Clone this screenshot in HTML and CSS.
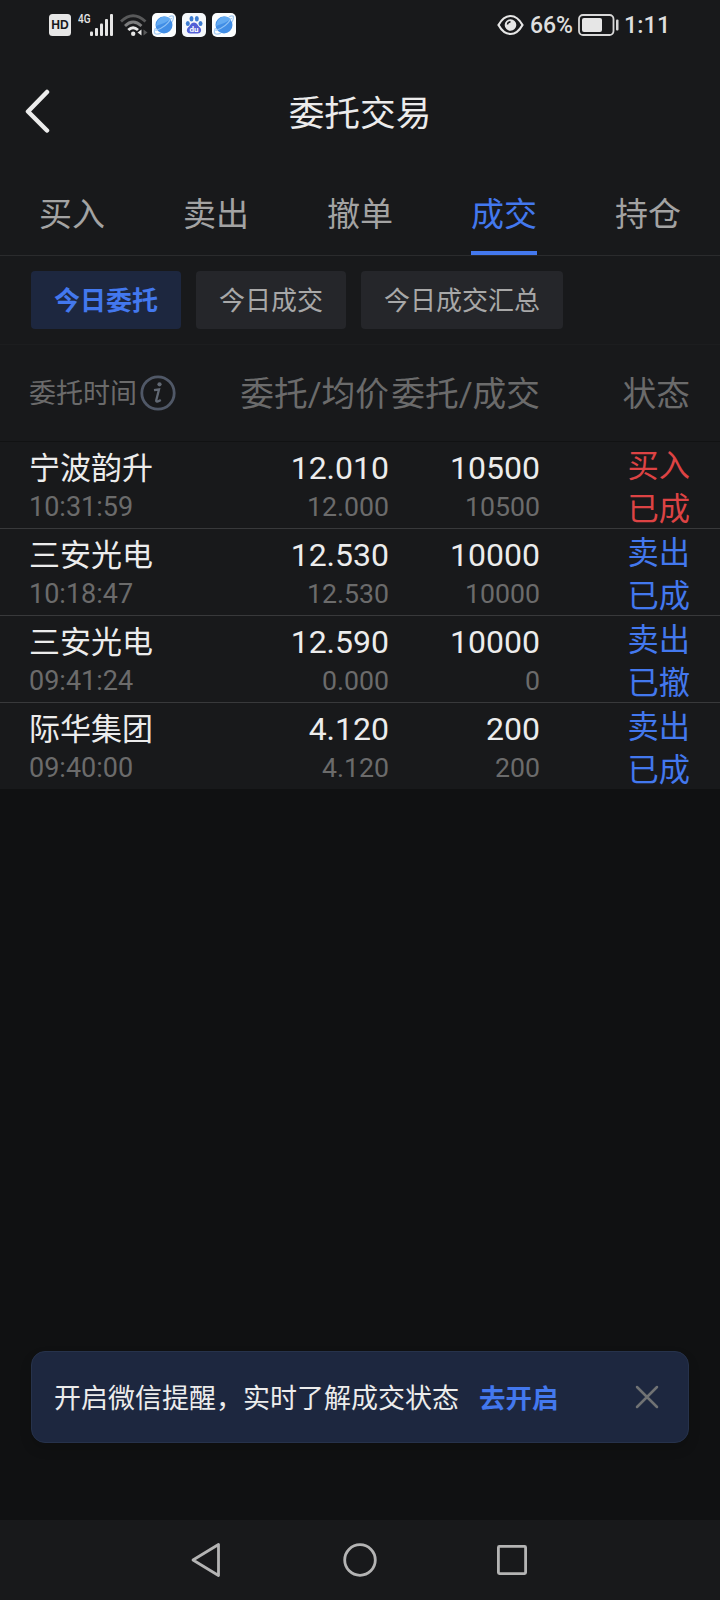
FILE: index.html
```html
<!DOCTYPE html>
<html lang="zh-CN">
<head>
	<meta charset="utf-8">
	<title>委托交易</title>
	<link rel="stylesheet" href="styles.css">
</head>
<body>
<div class="page">

	<div class="statusbar">
		<div class="status-left">
			<svg width="22" height="22" viewBox="0 0 22 22"><rect width="22" height="22" rx="3.5" fill="#e6e6e6"/><text x="11" y="15.4" class="hd" textLength="17.500" lengthAdjust="spacingAndGlyphs">HD</text></svg>
			<svg class="signal" width="36" height="32" viewBox="0 -4 36 32">
				<text x="0" y="9.800" class="net" textLength="12.500" lengthAdjust="spacingAndGlyphs">4G</text>
				<g fill="#e6e6e6"><rect x="12" y="18.500" width="3" height="4.500" rx="1"/><rect x="17" y="15" width="3" height="8" rx="1"/><rect x="22" y="10.500" width="3" height="12.500" rx="1"/><rect x="27" y="6" width="3" height="17" rx="1"/><rect x="32" y="1" width="3" height="22" rx="1"/></g>
			</svg>
			<svg class="wifi" width="28" height="24" viewBox="0 0 28 24">
				<g fill="none" stroke-width="2.800">
					<path d="M1 8.500Q13 -3 25.500 8.500" stroke="#58595a"/>
					<path d="M5 13Q13 5 21.500 13" stroke="#7c7d7e"/>
					<path d="M8.300 17Q13 12.300 18 17" stroke="#e6e6e6"/>
				</g>
				<circle cx="13.200" cy="20.800" r="2.200" fill="#e6e6e6"/>
				<path d="M21.500 16.500v6l-4-3z" fill="#e6e6e6"/><path d="M23.500 16.500v6l4-3z" fill="#58595a"/>
			</svg>
			<svg class="app" width="24" height="24" viewBox="0 0 24 24"><rect width="24" height="24" rx="5" fill="#fcfeff"/><circle cx="12" cy="12" r="8.500" fill="#428ee6"/><path d="M4 13Q5 5 12 3.600Q17 3.500 18.500 6.500Q12 11 4 13z" fill="#64abf2"/><path d="M3.500 17.500Q14 14.500 19.500 5" fill="none" stroke="#8fc2f5" stroke-width="1.200"/><path d="M3.500 15Q1.500 19 3 20.500Q5 22 9 20M17 4Q20 2 21.300 3.300Q22 5 20 9" fill="none" stroke="#a5cbf4" stroke-width="1.300"/></svg>
			<svg class="app" width="24" height="24" viewBox="0 0 24 24"><rect width="24" height="24" rx="5" fill="#f5f8fb"/>
				<g fill="#3c7bd0"><ellipse cx="5.800" cy="10.500" rx="2" ry="2.600"/><ellipse cx="9.500" cy="5.800" rx="2" ry="2.700"/><ellipse cx="14.800" cy="5.800" rx="2" ry="2.700"/><ellipse cx="18.500" cy="10.500" rx="2" ry="2.600"/></g>
				<path d="M12 9.500C15 9.500 15.500 12.500 18 14.500C20.500 17.500 18.500 20.800 15.500 20.500H8.500C5.500 20.800 3.500 17.500 6 14.500C8.500 12.500 9 9.500 12 9.500z" fill="#5360d6"/><text x="12" y="18.900" class="du">du</text></svg>
			<svg class="app" width="24" height="24" viewBox="0 0 24 24"><rect width="24" height="24" rx="5" fill="#fcfeff"/><circle cx="12" cy="12" r="8.500" fill="#428ee6"/><path d="M4 13Q5 5 12 3.600Q17 3.500 18.500 6.500Q12 11 4 13z" fill="#64abf2"/><path d="M3.500 17.500Q14 14.500 19.500 5" fill="none" stroke="#8fc2f5" stroke-width="1.200"/><path d="M3.500 15Q1.500 19 3 20.500Q5 22 9 20M17 4Q20 2 21.300 3.300Q22 5 20 9" fill="none" stroke="#a5cbf4" stroke-width="1.300"/></svg>
		</div>
		<div class="status-right">
			<svg width="27" height="22" viewBox="0 0 27 22"><path d="M1.500 11Q6.500 2 13.500 2T25.500 11Q20.500 20 13.500 20T1.500 11z" fill="none" stroke="#e6e6e6" stroke-width="2.200"/><circle cx="13.500" cy="11" r="5.800" fill="#e6e6e6"/><path d="M10.500 10.500q.3-2.500 3-2.800" fill="none" stroke="#18191b" stroke-width="1.500"/></svg>
			<span class="percent">66%</span>
			<svg class="battery" width="41" height="22" viewBox="0 0 41 22"><rect x="1" y="1" width="34.500" height="20" rx="4" fill="none" stroke="#d8d8d8" stroke-width="1.800"/><rect x="4" y="4" width="20" height="14" rx="2" fill="#e6e6e6"/><rect x="38" y="5.500" width="2.500" height="11" rx="1" fill="#d8d8d8"/></svg>
			<span class="clock">1:11</span>
		</div>
	</div>

	<div class="titlebar">
		<svg class="back" width="26" height="46" viewBox="0 0 26 46"><path d="M23 3L4 22.500L23 41.500" fill="none" stroke="#ececec" stroke-width="4.500" stroke-linecap="round" stroke-linejoin="round"/></svg>
		<div class="title">委托交易</div>
	</div>

	<div class="tabs">
		<div class="tab"><span>买入</span></div>
		<div class="tab"><span>卖出</span></div>
		<div class="tab"><span>撤单</span></div>
		<div class="tab active"><span>成交</span></div>
		<div class="tab"><span>持仓</span></div>
	</div>

	<div class="chips">
		<div class="chip on">今日委托</div>
		<div class="chip">今日成交</div>
		<div class="chip">今日成交汇总</div>
	</div>

	<div class="row head">
		<div class="head-time">委托时间<svg width="36" height="36" viewBox="0 0 36 36"><circle cx="18" cy="18" r="16.200" fill="none" stroke="#505867" stroke-width="2.800"/><circle cx="19.500" cy="9.300" r="2.100" fill="#626974"/><path d="M14 15.200L19 14.500L16.200 25.500Q15.800 27.800 20.800 25" fill="none" stroke="#626974" stroke-width="2.300"/></svg></div>
		<div class="num">委托/均价</div>
		<div class="num">委托/成交</div>
		<div class="num">状态</div>
	</div>

	<div class="list">
		<div class="row">
			<div class="name">宁波韵升<small>10:31:59</small></div>
			<div class="num">12.010<small>12.000</small></div>
			<div class="num">10500<small>10500</small></div>
			<div class="state buy">买入<br>已成</div>
		</div>
		<div class="row">
			<div class="name">三安光电<small>10:18:47</small></div>
			<div class="num">12.530<small>12.530</small></div>
			<div class="num">10000<small>10000</small></div>
			<div class="state">卖出<br>已成</div>
		</div>
		<div class="row">
			<div class="name">三安光电<small>09:41:24</small></div>
			<div class="num">12.590<small>0.000</small></div>
			<div class="num">10000<small>0</small></div>
			<div class="state">卖出<br>已撤</div>
		</div>
		<div class="row">
			<div class="name">际华集团<small>09:40:00</small></div>
			<div class="num">4.120<small>4.120</small></div>
			<div class="num">200<small>200</small></div>
			<div class="state">卖出<br>已成</div>
		</div>
	</div>

	<div class="space"></div>

	<div class="notice">
		<span class="notice-text">开启微信提醒，实时了解成交状态</span>
		<a class="open">去开启</a>
		<svg class="close" width="24" height="24" viewBox="0 0 24 24"><path d="M2 2L22 22M22 2L2 22" stroke="#707274" stroke-width="2.500" stroke-linecap="round"/></svg>
	</div>

	<div class="navbar">
		<svg width="36" height="36" viewBox="0 0 36 36"><path d="M28.500 2.500V33.500L3 18z"/></svg>
		<svg width="36" height="36" viewBox="0 0 36 36"><circle cx="18" cy="18" r="15.300"/></svg>
		<svg width="36" height="36" viewBox="0 0 36 36"><rect x="4.400" y="4.400" width="27.200" height="27.200" rx="1"/></svg>
	</div>

</div>
</body>
</html>
```
FILE: styles.css
```css
body{
	margin: 0;
	background-color: #101112;
	font-family: Roboto, "Noto Sans CJK SC", sans-serif;
	color: #ececec;
}
svg{display: block;
	flex: none;}

.page{
	width: 720px;
	height: 1600px;
	display: flex;
	flex-direction: column;
	overflow: hidden;
}

/* status bar */
.statusbar{
	height: 50px;
	box-sizing: border-box;
	padding: 0 52px 1px 49px;
	display: flex;
	justify-content: space-between;
	align-items: center;
	background-color: #18191b;
	color: #dedede;
}
.status-left, .status-right{display: flex;
	align-items: center;}
.hd{font: bold 13px "Liberation Sans", sans-serif;
	text-anchor: middle;
	fill: #18191b;}
.net{font: 500 13px Roboto, sans-serif;
	fill: #e6e6e6;}
.du{font: bold 8px Roboto, sans-serif;
	text-anchor: middle;
	fill: #ffffff;}
.signal{margin-left: 7px;}
.wifi{margin-left: 6px;}
.app{margin-left: 4px;}
.app + .app{margin-left: 6px;}
.percent{margin: 2px 5px 0 6px;
	font-size: 23px;
	font-weight: 500;
	line-height: 28px;}
.clock{margin: 1px 0 0 5px;
	width: 44px;
	font-size: 23.500px;
	font-weight: 500;
	line-height: 28px;}

/* title */
.titlebar{
	height: 124px;
	display: grid;
	grid-template-columns: 60px 1fr 60px;
	align-items: center;
	background-color: #18191b;
}
.back{margin-left: 24px;}
.title{text-align: center;
	font-size: 35.700px;
	line-height: 50px;
	padding-top: 4px;}

/* tabs */
.tabs{
	display: flex;
	height: 81px;
	border-bottom: 1px solid #2a2b2d;
	background-color: #18191b;
}
.tab{width: 144px;
	text-align: center;
	font-size: 33px;
	line-height: 82px;
	color: #a3a3a3;}
.tab span{display: inline-block;
	height: 77px;}
.active{color: #4378ee;}
.active span{border-bottom: 4px solid #4378ee;}

/* filter buttons */
.chips{
	display: flex;
	gap: 15px;
	padding: 15px 31px;
	height: 58px;
	border-bottom: 1px solid #1c1d1f;
	background-color: #18191b;
}
.chip{padding: 0 23px;
	border-radius: 4px;
	background-color: #25262a;
	color: #a8a8a8;
	font-size: 26px;
	line-height: 60px;
	height: 58px;}
.on{background-color: #1d273f;
	color: #4378ee;
	font-weight: bold;}

/* order table */
.row{
	display: grid;
	grid-template-columns: 210px 150px 151px 1fr;
	padding: 0 30px 0 29px;
	height: 86px;
	border-bottom: 1px solid #38393b;
	background-color: #18191b;
}
.head{height: 96px;
	border-bottom-color: #111213;
	line-height: 99px;
	font-size: 33.700px;
	color: #6b6b6b;}
.head-time{display: flex;
	align-items: center;
	font-size: 27px;}
.head-time svg{margin: 0 0 4px 3px;}
.num{text-align: right;
	white-space: nowrap;}
.list .num{font-size: 32px;
	line-height: 36px;
	padding-top: 8px;}
.name{font-size: 31px;
	line-height: 36px;
	padding-top: 9px;}
.row small{display: block;
	font-size: 26.700px;
	line-height: 40px;
	padding-top: 1px;
	color: #6b6b6b;}
.name small{font-size: 27px;
	padding-top: 0;}
.state{text-align: right;
	font-size: 31.300px;
	line-height: 43px;
	padding-top: 3px;
	color: #4378ee;}
.buy{color: #dd4344;}
.list .row:last-child{border-bottom: 0;}

.space{flex: 1;}

/* wechat reminder */
.notice{
	display: flex;
	align-items: center;
	height: 90px;
	margin: 0 31px 77px;
	padding: 0 29px 0 22px;
	border: 1px solid #26324b;
	border-radius: 14px;
	background-color: #1d273f;
	box-shadow: 0 6px 12px rgba(0,0,0,.15);
	font-size: 27px;
	line-height: 40px;
}
.notice-text{padding-top: 3px;}
.open{margin-left: 20px;
	padding-top: 3px;
	color: #4378ee;
	font-size: 26.500px;
	font-weight: bold;}
.close{margin-left: auto;}

.navbar{
	height: 80px;
	display: flex;
	justify-content: center;
	align-items: center;
	gap: 116px;
	background-color: #18191b;
}
.navbar svg{fill: none;
	stroke: #b4b4b4;
	stroke-width: 2.800;
	stroke-linejoin: round;}
```
